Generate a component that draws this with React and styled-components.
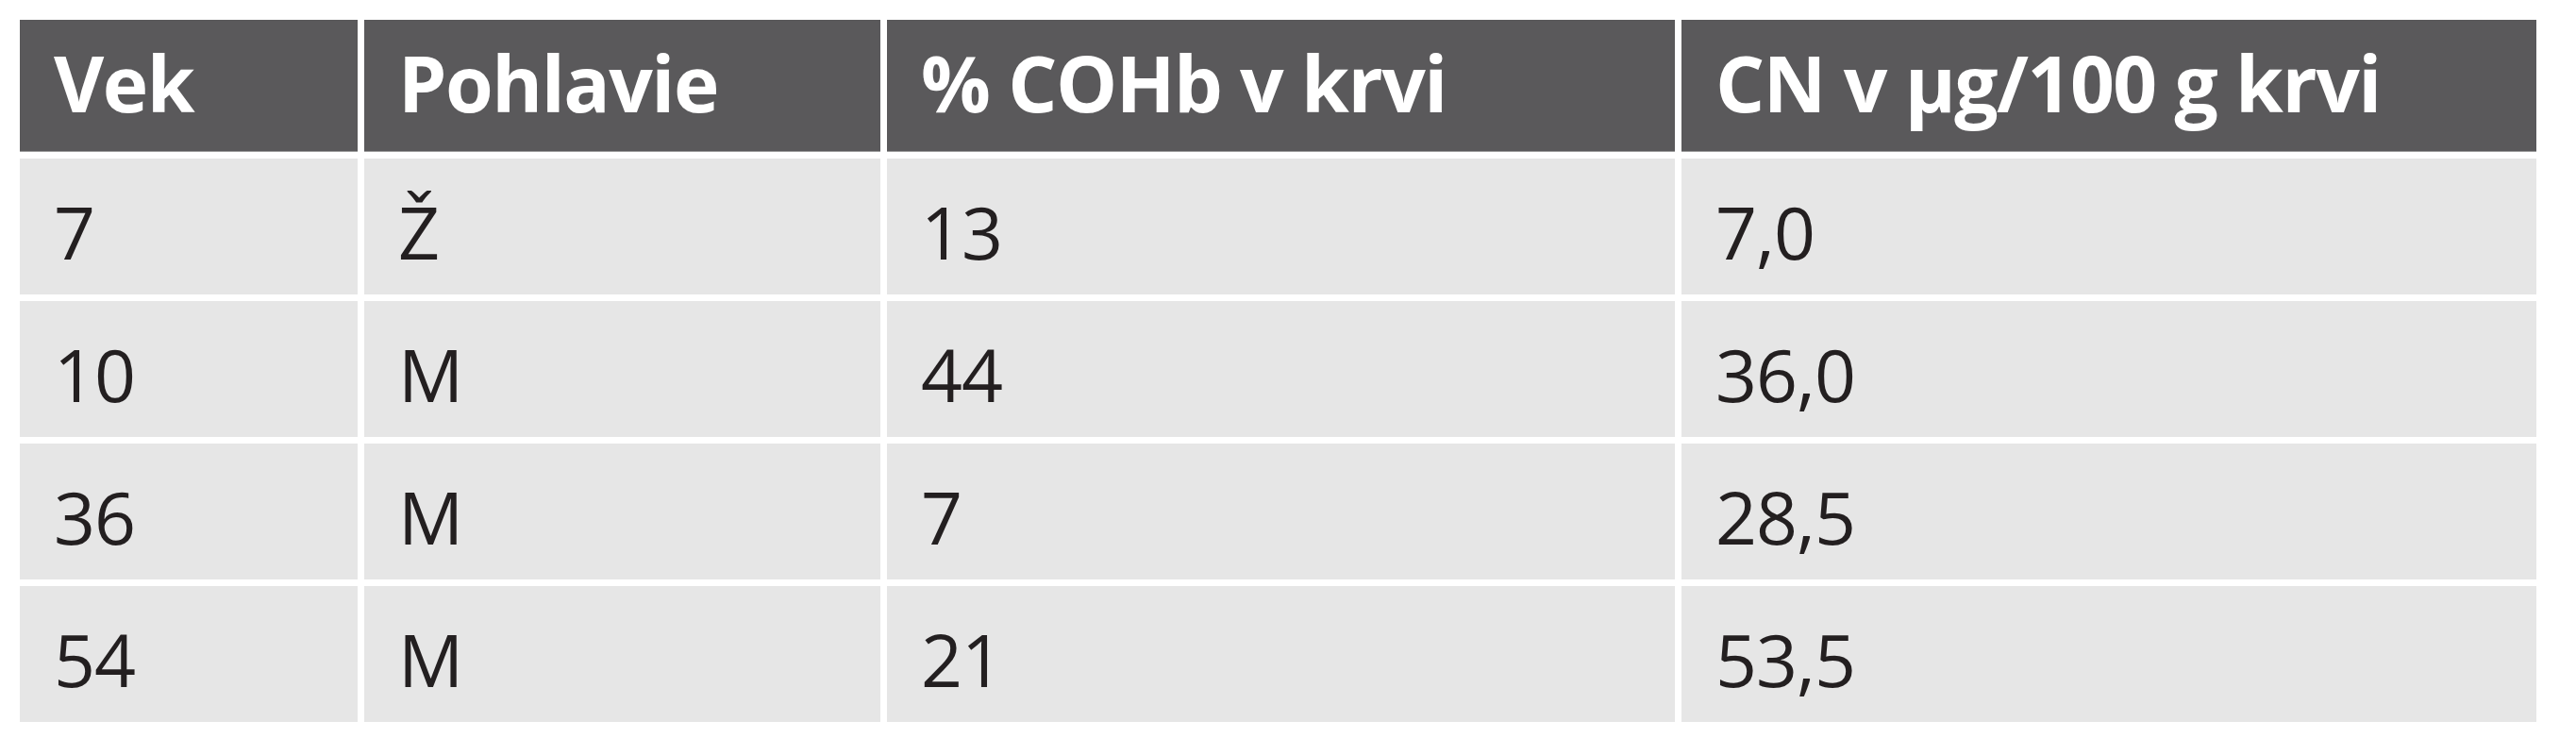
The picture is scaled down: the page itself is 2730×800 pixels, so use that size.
import React from 'react';
import styled, { createGlobalStyle } from 'styled-components';

const GlobalStyle = createGlobalStyle`
  html, body {
    margin: 0;
    padding: 0;
    background: #ffffff;
  }
`;

const TableBlock = styled.div`
  padding: 21px;
  display: grid;
  grid-template-columns: 358px 547px 835px 906px;
  grid-auto-rows: 144px;
  grid-template-rows: 140px;
  gap: 7px;
  font-family: 'Open Sans', 'Noto Sans', sans-serif;
`;

const HeadCell = styled.div`
  background: #5a595b;
  color: #ffffff;
  font-weight: 700;
  font-size: 82px;
  letter-spacing: -1.5px;
  line-height: 1;
  display: flex;
  align-items: center;
  padding: 0 0 8px 36px;
  border-bottom: 1px solid #9b9b9b;
  white-space: nowrap;
`;

const Cell = styled.div`
  background: #e6e6e6;
  color: #231f20;
  font-weight: 400;
  font-size: 77px;
  letter-spacing: -1px;
  line-height: 1;
  display: flex;
  align-items: center;
  padding: 10px 0 0 36px;
  white-space: nowrap;
`;

const head = ['Vek', 'Pohlavie', '% COHb v krvi', 'CN v µg/100 g krvi'];

const rows = [
  ['7', 'Ž', '13', '7,0'],
  ['10', 'M', '44', '36,0'],
  ['36', 'M', '7', '28,5'],
  ['54', 'M', '21', '53,5'],
];

const App = () => {
  return (
    <>
      <GlobalStyle />
      <TableBlock>
        {head.map((h) => (
          <HeadCell key={h}>{h}</HeadCell>
        ))}
        {rows.map((row, i) =>
          row.map((v, j) => <Cell key={`${i}-${j}`}>{v}</Cell>)
        )}
      </TableBlock>
    </>
  );
};

export default App;
